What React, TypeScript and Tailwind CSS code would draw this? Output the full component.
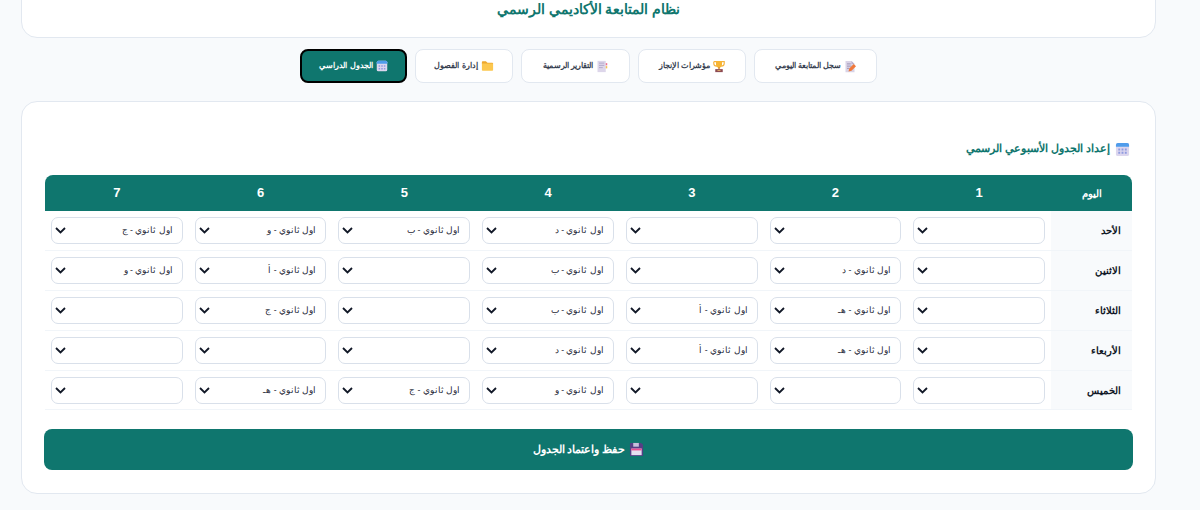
import React from 'react';

const days = [
  { name: 'الأحد', cells: ['', '', '', 'اول ثانوي - د', 'اول ثانوي - ب', 'اول ثانوي - و', 'اول ثانوي - ج'] },
  { name: 'الاثنين', cells: ['', 'اول ثانوي - د', '', 'اول ثانوي - ب', '', 'اول ثانوي - أ', 'اول ثانوي - و'] },
  { name: 'الثلاثاء', cells: ['', 'اول ثانوي - هـ', 'اول ثانوي - أ', 'اول ثانوي - ب', '', 'اول ثانوي - ج', ''] },
  { name: 'الأربعاء', cells: ['', 'اول ثانوي - هـ', 'اول ثانوي - أ', 'اول ثانوي - د', '', '', ''] },
  { name: 'الخميس', cells: ['', '', '', 'اول ثانوي - و', 'اول ثانوي - ج', 'اول ثانوي - هـ', ''] },
];

const MemoIcon = () => (
  <svg width="12" height="13" viewBox="0 0 16 17" className="shrink-0">
    <path d="M2 1h8l4 4v11H2z" fill="#d9d3e6" />
    <path d="M10 1l4 4h-4z" fill="#b9aecb" />
    <path d="M4 5h5M4 8h6M4 11h3" stroke="#8f86a8" strokeWidth="1" />
    <path d="M6 15l1-4 6-6 3 3-6 6z" fill="#f0793a" />
  </svg>
);

const TrophyIcon = () => (
  <svg width="12" height="13" viewBox="0 0 16 17" className="shrink-0">
    <path d="M1 2h14v2c0 3-2 4-4 4M1 2v2c0 3 2 4 4 4" fill="none" stroke="#f4b23e" strokeWidth="1.5" />
    <path d="M4 1h8v5c0 3-2 4-4 4S4 9 4 6z" fill="#f7b535" />
    <path d="M7 9h2v3H7z" fill="#d98f20" />
    <path d="M3 12h10v4H3z" fill="#8d4a52" />
    <path d="M6 13.500h4v1H6z" fill="#f2c66b" />
  </svg>
);

const TabsIcon = () => (
  <svg width="12" height="13" viewBox="0 0 16 17" className="shrink-0">
    <path d="M2 1h11v15H2z" fill="#ddd6ea" />
    <path d="M4 4h7M4 7h7M4 10h5" stroke="#a79cc0" strokeWidth="1" />
    <path d="M13 4h2v3h-2z" fill="#ef6f8f" />
    <path d="M13 8h2v3h-2z" fill="#f2c14e" />
  </svg>
);

const FolderIcon = () => (
  <svg width="13" height="12" viewBox="0 0 16 15" className="shrink-0">
    <path d="M1 2.500A1 1 0 0 1 2 1.500h4l2 2h6a1 1 0 0 1 1 1V5H1z" fill="#eda72e" />
    <path d="M1 4.500h14v8a1 1 0 0 1-1 1H2a1 1 0 0 1-1-1z" fill="#fcc74f" />
  </svg>
);

const CalendarIcon = ({ size = 12 }: { size?: number }) => (
  <svg width={size} height={size} viewBox="0 0 16 16" className="shrink-0">
    <rect x="1" y="1" width="14" height="14" rx="2" fill="#dcd6ee" />
    <path d="M3 1h10a2 2 0 0 1 2 2v2H1V3a2 2 0 0 1 2-2z" fill="#4f9ceb" />
    <path d="M3.500 7h2v2h-2zM7 7h2v2H7zM10.500 7h2v2h-2zM3.500 10.500h2v2h-2zM7 10.500h2v2H7zM10.500 10.500h2v2h-2z" fill="#8f9be0" />
  </svg>
);

const SaveIcon = () => (
  <svg width="15" height="15" viewBox="0 0 16 16" className="shrink-0">
    <path d="M1 2a1 1 0 0 1 1-1h11l2 2v11a1 1 0 0 1-1 1H2a1 1 0 0 1-1-1z" fill="#553f85" />
    <path d="M4.500 1h6v4h-6z" fill="#c7bfdc" />
    <path d="M2.500 7h11v7h-11z" fill="#e6dff0" />
    <path d="M2.500 7h11v2h-11z" fill="#ea4f93" />
  </svg>
);

const tabs = [
  { label: 'سجل المتابعة اليومي', icon: <MemoIcon />, width: 'w-[123px]' },
  { label: 'مؤشرات الإنجاز', icon: <TrophyIcon />, width: 'w-[108px]' },
  { label: 'التقارير الرسمية', icon: <TabsIcon />, width: 'w-[109px]' },
  { label: 'إدارة الفصول', icon: <FolderIcon />, width: 'w-[98px]' },
  { label: 'الجدول الدراسي', icon: <CalendarIcon />, width: 'w-[107px]', active: true },
];

const ClassSelect = ({ value }: { value: string }) => (
  <div className="relative">
    <select
      defaultValue={value}
      className="block w-full h-[27px] appearance-none rounded-[7px] border-[1.5px] border-[#d9e0ea] bg-white pl-2 pr-[9px] text-[8.7px] font-medium text-[#1f2937]"
    >
      <option value=""></option>
      <option value={value}>{value}</option>
    </select>
    <svg width="11" height="7" viewBox="0 0 11 7" className="absolute left-[4px] top-[10px]">
      <path d="M1 1l4.500 4.500L10 1" fill="none" stroke="#111827" strokeWidth="1.8" />
    </svg>
  </div>
);

const App = () => {
  return (
    <div className="h-[510px] overflow-hidden bg-[#f8fafc]">
      <div dir="rtl" className="w-[1177px] font-['Liberation_Sans','Noto_Sans',sans-serif]">
        <div className="mx-[21px] -mt-[20px] h-[58px] rounded-2xl border border-[#e2e8f0] bg-white flex items-start justify-center pt-[18px]">
          <h1 className="text-[14px] font-bold text-[#0f766e]">نظام المتابعة الأكاديمي الرسمي</h1>
        </div>

        <div className="mt-[11px] flex justify-center gap-[8px]">
          {tabs.map((tab) => (
            <button
              key={tab.label}
              className={
                tab.active
                  ? `${tab.width} h-[34px] rounded-lg border-2 border-black bg-[#0f766e] text-white text-[7.8px] font-bold flex items-center justify-center gap-[3px]`
                  : `${tab.width} h-[34px] rounded-lg border border-[#e2e8f0] bg-white text-[#374151] text-[7.8px] font-bold flex items-center justify-center gap-[3px]`
              }
            >
              {tab.icon}
              {tab.label}
            </button>
          ))}
        </div>

        <div className="mx-[21px] mt-[18px] h-[393px] rounded-2xl border border-[#e2e8f0] bg-white px-[23px] pt-[37px]">
          <h2 className="mb-[16px] flex items-center gap-[5px] text-[11.4px] font-bold text-[#0f766e] h-[20px] pr-[2px]">
            <CalendarIcon size={15} />
            إعداد الجدول الأسبوعي الرسمي
          </h2>

          <table className="w-full table-fixed">
            <colgroup>
              <col className="w-[81px]" />
            </colgroup>
            <thead>
              <tr className="h-[36px] bg-[#0f766e] text-white">
                <th className="rounded-tr-lg text-[10px] font-bold">اليوم</th>
                {[1, 2, 3, 4, 5, 6, 7].map((n) => (
                  <th key={n} className="text-[13px] font-bold last:rounded-tl-lg">{n}</th>
                ))}
              </tr>
            </thead>
            <tbody>
              {days.map((day) => (
                <tr key={day.name} className="h-[39.8px]">
                  <td className="bg-[#f8fafc] border-b border-[#f1f5f9] px-[11px] text-[10px] font-bold text-[#111827]">{day.name}</td>
                  {day.cells.map((value, i) => (
                    <td key={i} className="border-b border-[#f1f5f9] px-[6px] py-0">
                      <ClassSelect value={value} />
                    </td>
                  ))}
                </tr>
              ))}
            </tbody>
          </table>

          <button className="-mx-px mt-[19px] h-[41px] w-[calc(100%+2px)] rounded-lg bg-[#0f766e] text-white text-[10.5px] font-bold flex items-center justify-center gap-[4px]">
            <SaveIcon />
            حفظ واعتماد الجدول
          </button>
        </div>
      </div>
    </div>
  );
};

export default App;
